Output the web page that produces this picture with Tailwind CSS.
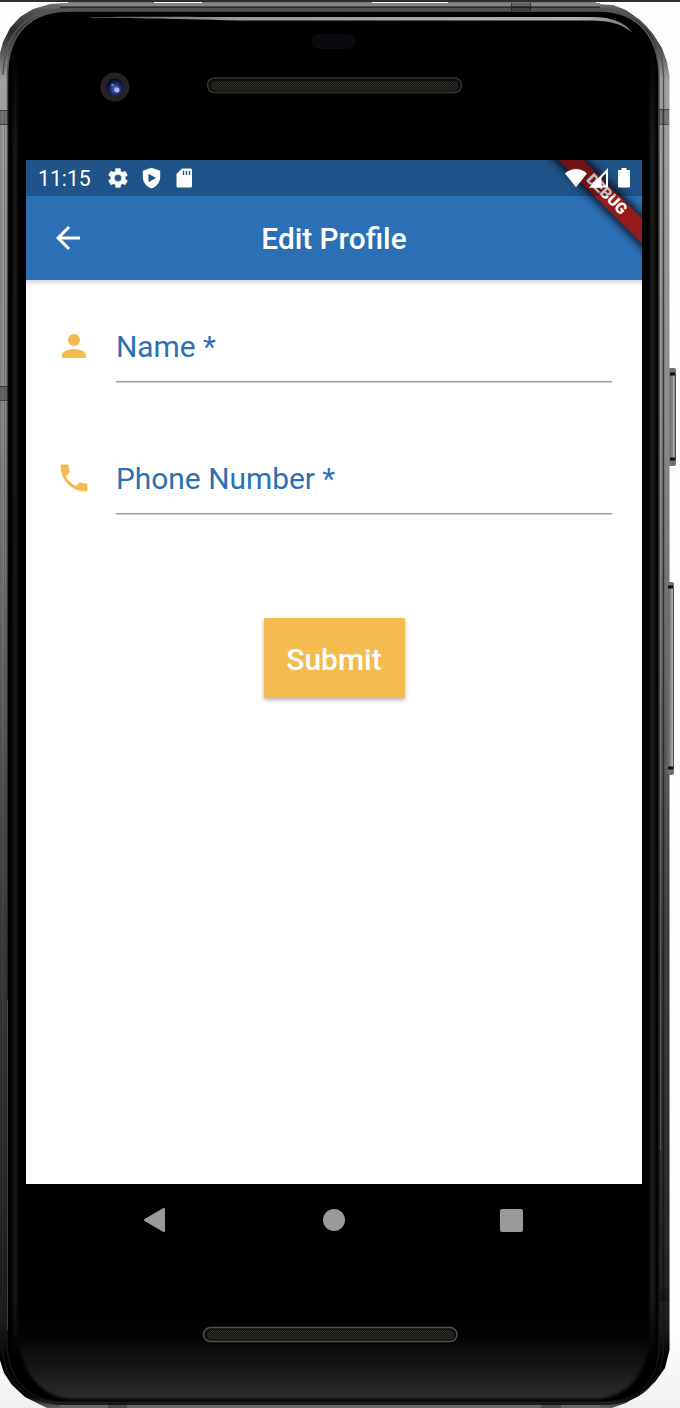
<!DOCTYPE html>
<html lang="en">
<head>
<meta charset="utf-8">
<title>Edit Profile</title>
<script src="https://cdn.jsdelivr.net/npm/@tailwindcss/browser@4"></script>
</head>
<body class="bg-[#fdfcfb] font-[Roboto,sans-serif]">
<div class="relative isolate flex h-[1408px] w-[680px] flex-col overflow-hidden bg-gradient-to-b from-[#fefdfc] from-95% to-[#f1f0ef]">

  <!-- Phone body -->
  <svg class="absolute inset-0 -z-10" width="680" height="1408" viewBox="0 0 680 1408">
    <defs>
      <linearGradient id="metal" x1="0" y1="0" x2="0" y2="1">
        <stop offset="0" stop-color="#777"/><stop offset=".006" stop-color="#555"/><stop offset=".02" stop-color="#2c2c2c"/><stop offset=".035" stop-color="#555"/><stop offset=".055" stop-color="#a0a0a0"/>
        <stop offset=".3" stop-color="#8b8b8b"/><stop offset=".5" stop-color="#626262"/><stop offset=".65" stop-color="#404040"/>
        <stop offset=".85" stop-color="#2c2c2c"/><stop offset=".94" stop-color="#1c1c1c"/><stop offset=".965" stop-color="#000"/><stop offset=".992" stop-color="#000"/><stop offset="1" stop-color="#666"/>
      </linearGradient>
      <linearGradient id="inner" x1="0" y1="0" x2="0" y2="1">
        <stop offset="0" stop-color="#555"/><stop offset=".5" stop-color="#333"/><stop offset="1" stop-color="#111"/>
      </linearGradient>
      <linearGradient id="chin" gradientUnits="userSpaceOnUse" x1="0" y1="1310" x2="0" y2="1400">
        <stop offset="0" stop-color="#000"/><stop offset=".3" stop-color="#030303"/><stop offset=".6" stop-color="#141414"/><stop offset="1" stop-color="#2e2e2e"/>
      </linearGradient>
      <linearGradient id="stripe" x1="0" y1="0" x2="0" y2="1">
        <stop offset="0" stop-color="#1b1b1b" stop-opacity="0"/><stop offset=".08" stop-color="#1b1b1b"/><stop offset=".95" stop-color="#1b1b1b"/><stop offset="1" stop-color="#1b1b1b" stop-opacity="0"/>
      </linearGradient>
      <linearGradient id="shine" x1="0" y1="0" x2="1" y2="0">
        <stop offset="0" stop-color="#a4b0b3" stop-opacity=".5"/><stop offset=".25" stop-color="#8e999b"/><stop offset=".9" stop-color="#a9b4b6"/><stop offset="1" stop-color="#777"/>
      </linearGradient>
      <linearGradient id="key" x1="0" y1="0" x2="1" y2="0">
        <stop offset="0" stop-color="#666"/><stop offset=".5" stop-color="#888"/><stop offset=".72" stop-color="#bbb"/><stop offset="1" stop-color="#222"/>
      </linearGradient>
      <pattern id="mesh" width="2" height="2" patternUnits="userSpaceOnUse">
        <rect width="2" height="2" fill="#181716"/><rect width="1" height="1" fill="#32302d"/><rect x="1" y="1" width="1" height="1" fill="#282624"/>
      </pattern>
      <radialGradient id="lens" cx=".55" cy=".62" r=".6">
        <stop offset="0" stop-color="#9fb3ef"/><stop offset=".25" stop-color="#3c52a5"/><stop offset=".6" stop-color="#18215a"/><stop offset="1" stop-color="#070a1b"/>
      </radialGradient>
      <filter id="soft" filterUnits="userSpaceOnUse" x="0" y="0" width="680" height="1408" color-interpolation-filters="sRGB"><feGaussianBlur stdDeviation="1.500"/></filter>
    </defs>
    <rect width="680" height="2" fill="#302d2d"/>
    <!-- side keys -->
    <rect x="668" y="368" width="8" height="98" rx="2" fill="#707070"/>
    <rect x="669" y="374" width="7" height="86" fill="url(#key)"/>
    <path d="M670 374h5M670 459h5" stroke="#111" stroke-width="3"/>
    <!-- shell -->
    <path d="M-1 60L0 53L3 42L10 28L20 17L33 9L50 4L68 3V2H154V3.500H202V2H372V2H596V4L613 5L626 10L640 20L653 34L662 48L667 62L669.500 76V1350L665 1368L655 1382L640 1394L626 1403L612 1408H47L43 1406L25 1397L12 1385L4 1373L-1 1357Z" fill="url(#metal)"/>
    <path d="M154 2.500H202M372 2.500H448" stroke="#fdfcfb"/>
    <path d="M60 4.500H600" stroke="#858585" stroke-width="3"/>
    <path d="M60 7.500H600" stroke="#2a2a2a" stroke-width="2"/>
    <path d="M3 75C5 30 28 9 70 9H598C640 9 662 34 663.500 76V1346C663 1382 642 1404 602 1404H66C24 1404 3 1380 2 1344" fill="none" stroke="url(#inner)" stroke-width="1.500"/>
    <path d="M7.500 76C8 32 31 11 70 11H598C638 11 658.500 36 659 76V1346C659 1380 640 1402 602 1402H66C28 1402 8 1380 7 1344Z" fill="#000" stroke="url(#inner)" stroke-width="1.500"/>
    <path d="M60 1406.500H600" stroke="#666" stroke-width="3"/>
    <path d="M1 110V1300M4.500 110V1300M663 110V1300" stroke="#000" stroke-opacity=".22"/>
    <path d="M660.500 80V1150" stroke="#999" stroke-opacity=".35"/>
    <path d="M7.500 1000V1330" stroke="#777" stroke-opacity=".45"/>
    <rect x="667.500" y="582" width="6.500" height="193" rx="2" fill="#707070"/>
    <rect x="668" y="588" width="6" height="181" fill="url(#key)"/>
    <path d="M668 587h5M668 768h5" stroke="#111" stroke-width="3"/>
    <g filter="url(#soft)">
      <path d="M14 1310C17 1372 39 1396 70 1399H598C633 1395 651 1370 653 1310Z" fill="url(#chin)"/>
      <rect x="13" y="40" width="4" height="1320" fill="url(#stripe)"/>
      <rect x="650" y="40" width="5" height="1320" fill="url(#stripe)"/>
    </g>
    <path d="M90 17C130 16.500 160 16.500 240 17H592C613 17 625 23 633 33C622 24 610 20.500 590 20.500H240C160 18.500 120 18 90 17.700Z" fill="url(#shine)"/>
    <!-- antenna bands -->
    <path d="M0 110H8V125H0ZM659 109H669V124H659ZM0 386H8V400H0ZM511 3H531V11H511ZM108 1403H127V1408H108ZM541 1403H561V1408H541ZM659 1288H669V1302H659Z" fill="#000" fill-opacity=".25"/>
    <path d="M0 110.500H8M0 124.500H8M659 109.500H669M659 124.500H669M0 386.500H8M0 400.500H8M511.500 3V11M530.500 3V11M659 1288.500H669M659 1302.500H669" stroke="#222" stroke-opacity=".6"/>
    <!-- camera, sensor, speakers -->
    <circle cx="114.800" cy="87" r="14.500" fill="#262324"/>
    <circle cx="114.800" cy="87" r="8.500" fill="url(#lens)"/>
    <circle cx="117" cy="90" r="2.500" fill="#a7b7ed"/><circle cx="112.500" cy="85" r="1.300" fill="#6c85e0"/>
    <rect x="311" y="34" width="45" height="15" rx="7.500" fill="#090a0e"/>
    <rect x="207.500" y="78" width="254" height="14.500" rx="7" fill="#100f0e" stroke="#363433" stroke-width="1.500"/>
    <rect x="211" y="81" width="247" height="9.500" rx="4.500" fill="url(#mesh)"/>
    <rect x="203.500" y="1327.500" width="253.500" height="14" rx="7" fill="#100f0e" stroke="#51504e" stroke-width="1.500"/>
    <rect x="207" y="1330" width="247" height="9.500" rx="4.500" fill="url(#mesh)"/>
  </svg>

  <!-- Screen -->
  <main class="relative mt-40 ml-[26px] flex h-[1024px] w-[616px] flex-col overflow-hidden bg-white">
    <header class="relative flex h-[120px] shrink-0 flex-col overflow-hidden bg-[#2b6fb4]">
      <div class="absolute top-[27px] left-[480.5px] flex h-[18px] w-[200px] rotate-45 items-center justify-center bg-[#981919] pr-[3px] text-[15.6px] font-black text-white shadow-[0_0_10px_2px_rgba(0,0,0,0.9)]">DEBUG</div>
      <div class="relative flex h-9 items-center bg-black/25 pr-3 pl-3 text-white">
        <span class="w-[69px] pt-0.5 text-[21.2px] leading-none">11:15</span>
        <svg width="22" height="22" viewBox="1 1 22 22" fill="currentColor" stroke="currentColor" stroke-width=".4"><path d="M19.140 12.940c.04-.3.060-.61.060-.94 0-.32-.02-.64-.07-.94l2.030-1.580c.18-.14.230-.41.120-.61l-1.920-3.320c-.12-.22-.37-.29-.59-.22l-2.390.96c-.5-.38-1.030-.7-1.620-.94L14.400 2.810c-.04-.24-.24-.41-.48-.41h-3.840c-.24 0-.43.170-.47.410L9.250 5.350c-.59.240-1.130.57-1.620.94L5.240 5.330c-.22-.08-.47 0-.59.220L2.740 8.870c-.12.210-.08.470.120.610l2.030 1.580c-.05.3-.09.630-.09.940s.02.640.070.940l-2.030 1.580c-.18.140-.23.410-.12.610l1.920 3.320c.12.220.37.290.59.220l2.390-.96c.5.380 1.030.7 1.620.94l.36 2.540c.05.240.24.410.48.410h3.840c.24 0 .44-.17.470-.41l.36-2.540c.59-.24 1.130-.56 1.620-.94l2.390.96c.22.080.47 0 .59-.22l1.920-3.320c.12-.22.070-.47-.12-.61l-2.010-1.580zM12 15.600a3.600 3.600 0 1 1 0-7.200 3.600 3.600 0 0 1 0 7.200z"/></svg>
        <svg class="ml-[12.5px]" width="19" height="22" viewBox="0 0 19 22"><path d="M9.500.800L18.200 3.800V10C18.200 15.500 14.500 19.500 9.500 21.500C4.500 19.500.800 15.500.800 10V3.800Z" fill="currentColor"/><path d="M6.500 6.800L14 11L6.500 15.200Z" fill="#205487"/></svg>
        <svg class="ml-[15px]" width="17" height="20" viewBox="0 0 17 20"><path d="M6 .500H14.500Q16 .500 16 2V18Q16 19.500 14.500 19.500H2Q.5 19.500.5 18V6Z" fill="currentColor"/><path d="M7.500 3V7M10.500 3V7M13.500 3V7" stroke="#205487" stroke-width="1.400"/></svg>
        <svg class="ml-auto" width="24" height="20" viewBox="0 0 24 20" fill="currentColor"><path d="M1 5.500C7-.5 17-.5 23 5.500L12 19.200Z"/></svg>
        <svg class="ml-px" width="20" height="20" viewBox="0 0 20 20"><path d="M18 2.500V18.500H2.500Z" fill="none" stroke="currentColor" stroke-width="2"/><path d="M.5 19.500L12.500 7.500V19.500Z" fill="currentColor"/></svg>
        <svg class="ml-[9px]" width="12" height="20" viewBox="0 0 12 20" fill="currentColor"><path d="M3.500 0H8.500V2H11Q12 2 12 3V18.500Q12 19.500 11 19.500H1Q0 19.500 0 18.500V3Q0 2 1 2H3.500Z"/></svg>
      </div>
      <div class="grid grow grid-cols-[84px_1fr_84px] items-center text-white">
        <svg class="ml-6" width="36" height="36" viewBox="0 0 24 24" fill="currentColor"><path d="M20 11H7.830l5.590-5.590L12 4l-8 8 8 8 1.410-1.410L7.830 13H20v-2z"/></svg>
        <h1 class="pt-0.5 text-center text-[29.8px] leading-none font-medium">Edit Profile</h1>
      </div>
    </header>
    <div class="h-1.5 shrink-0 bg-gradient-to-b from-[#d8d8d8] to-white"></div>

    <form class="flex flex-col pr-[30px] pl-[30px]">
      <label class="mt-[30px] flex h-[66px] items-start">
        <svg class="mt-3 text-[#f4bb51]" width="36" height="36" viewBox="0 0 24 24" fill="currentColor"><path d="M12 12c2.210 0 4-1.790 4-4s-1.790-4-4-4-4 1.790-4 4 1.790 4 4 4zm0 2c-2.670 0-8 1.340-8 4v2h16v-2c0-2.660-5.330-4-8-4z"/></svg>
        <span class="ml-6 flex h-[66px] grow items-start border-b border-[#9c9c9c] pt-4 text-[29.9px] leading-[30px] text-[#2b6fb4] shadow-[0_1px_0_#d0d0d0]">Name *</span>
      </label>
      <label class="mt-[66px] flex h-[66px] items-start">
        <svg class="mt-3 text-[#f4bb51]" width="36" height="36" viewBox="0 0 24 24" fill="currentColor"><path d="M6.620 10.790c1.440 2.830 3.760 5.140 6.590 6.590l2.200-2.200c.27-.27.670-.36 1.020-.24 1.120.37 2.330.57 3.570.57.550 0 1 .45 1 1V20c0 .55-.45 1-1 1-9.390 0-17-7.610-17-17 0-.55.450-1 1-1h3.500c.55 0 1 .45 1 1 0 1.250.2 2.450.57 3.570.110.350.030.740-.25 1.020l-2.200 2.200z"/></svg>
        <span class="ml-6 flex h-[66px] grow items-start border-b border-[#9c9c9c] pt-4 text-[29.9px] leading-[30px] text-[#2b6fb4] shadow-[0_1px_0_#d0d0d0]">Phone Number *</span>
      </label>
      <button type="button" class="mt-[104px] h-20 w-[141px] self-center rounded-[1px] bg-[#f4bb51] pt-[3px] text-[30px] leading-none font-medium text-white shadow-[0_2px_4px_rgba(0,0,0,0.3)]">Submit</button>
    </form>
  </main>

  <!-- System navigation -->
  <nav class="ml-[143px] flex h-[72px] w-[380px] items-center justify-between text-[#9a9a9a]">
    <svg width="23" height="26" viewBox="0 0 23 26" fill="currentColor"><path d="M1.500 12Q.5 13 1.500 14L20.500 25Q22 25.500 22 24V2Q22 .5 20.500 1Z"/></svg>
    <svg class="ml-px" width="22" height="22" viewBox="0 0 22 22" fill="currentColor"><circle cx="11" cy="11" r="11"/></svg>
    <div class="h-[23px] w-[23px] rounded-[2px] bg-current"></div>
  </nav>
</div>
</body>
</html>
